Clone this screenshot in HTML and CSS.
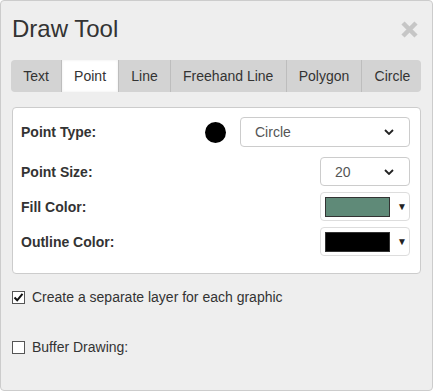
FILE: index.html
```html
<!DOCTYPE html>
<html lang="en">
<head>
    <meta charset="UTF-8">
    <meta name="viewport" content="width=device-width, initial-scale=1.0">
    <title>Draw Tool</title>
    <link rel="stylesheet" href="styles.css">
</head>
<body>
    <div class="panel">
        <div class="panel-header">
            <h1>Draw Tool</h1>
            <span class="close-button">
                <svg width="19" height="19" viewBox="0 0 19 19">
                    <path d="M3 3 L16 16 M16 3 L3 16" stroke="#c6c6c6" stroke-width="4.5" stroke-linecap="butt"/>
                </svg>
            </span>
        </div>

        <div class="tabs">
            <div class="tab">Text</div>
            <div class="tab active">Point</div>
            <div class="tab">Line</div>
            <div class="tab">Freehand Line</div>
            <div class="tab">Polygon</div>
            <div class="tab">Circle</div>
        </div>

        <!-- Point options -->
        <div class="card">
            <div class="row row-type">
                <label>Point Type:</label>
                <span class="preview-dot"></span>
                <div class="select select-wide">
                    <span>Circle</span>
                    <svg class="chevron" width="10" height="6" viewBox="0 0 10 6"><path d="M1 1 L5 5 L9 1" fill="none" stroke="#222" stroke-width="1.8"/></svg>
                </div>
            </div>
            <div class="row">
                <label>Point Size:</label>
                <div class="select select-small">
                    <span>20</span>
                    <svg class="chevron" width="10" height="6" viewBox="0 0 10 6"><path d="M1 1 L5 5 L9 1" fill="none" stroke="#222" stroke-width="1.8"/></svg>
                </div>
            </div>
            <div class="row">
                <label>Fill Color:</label>
                <div class="color-picker">
                    <span class="swatch swatch-fill"></span>
                    <span class="arrow">&#9660;</span>
                </div>
            </div>
            <div class="row">
                <label>Outline Color:</label>
                <div class="color-picker">
                    <span class="swatch swatch-outline"></span>
                    <span class="arrow">&#9660;</span>
                </div>
            </div>
        </div>

        <div class="check-row first">
            <span class="checkbox">
                <svg width="11" height="11" viewBox="0 0 11 11"><path d="M1.5 5.5 L4.2 8.3 L9.5 1.8" fill="none" stroke="#111" stroke-width="2"/></svg>
            </span>
            <span>Create a separate layer for each graphic</span>
        </div>
        <div class="check-row">
            <span class="checkbox"></span>
            <span>Buffer Drawing:</span>
        </div>
    </div>
</body>
</html>
```

FILE: styles.css
```css
body {
    margin: 0;
    font-family: "Liberation Sans", Arial, sans-serif;
    color: #333;
}
.panel {
    width: 433px;
    height: 391px;
    box-sizing: border-box;
    background-color: #eee;
    border: 1px solid #ccc;
    border-radius: 4px;
    padding: 14px 11px 0 10px;
}
.panel-header {
    display: flex;
    justify-content: space-between;
    align-items: center;
}
.panel-header h1 {
    margin: 0 0 0 1px;
    font-size: 24px;
    font-weight: normal;
    line-height: 28px;
    color: #333;
}
.close-button {
    display: flex;
    margin-right: 2px;
}
.tabs {
    display: flex;
    margin-top: 17px;
    height: 32px;
    background-color: #d3d3d3;
    border-radius: 4px;
}
.tab {
    flex: none;
    display: flex;
    align-items: center;
    justify-content: center;
    padding: 0 12.15px;
    font-size: 14px;
    color: #333;
    border-left: 1px solid #bdbdbd;
}
.tab:first-child {
    border-left: none;
    border-radius: 4px 0 0 4px;
}
.tab:last-child {
    flex: 1;
    border-radius: 0 4px 4px 0;
}
.tab.active {
    background-color: #fff;
    box-shadow: inset 0 0 3px rgba(0, 0, 0, 0.08);
}
.card {
    margin: 15px 0 0 1px;
    background-color: #fff;
    border: 1px solid #ccc;
    border-radius: 4px;
    padding: 9px 10px 17px 8px;
}
.row {
    display: flex;
    align-items: center;
    margin-top: 6px;
}
.row-type {
    margin-top: 0;
    margin-bottom: 10px;
}
.row label {
    flex: 1;
    font-size: 14px;
    font-weight: bold;
    color: #333;
}
.preview-dot {
    width: 21px;
    height: 21px;
    border-radius: 50%;
    background-color: #000;
    margin-right: 14px;
}
.select {
    display: flex;
    align-items: center;
    justify-content: space-between;
    box-sizing: border-box;
    background-color: #fff;
    border: 1px solid #ccc;
    border-radius: 4px;
    padding: 0 15px 0 14px;
    font-size: 14px;
    color: #555;
}
.select-wide {
    width: 170px;
    height: 30px;
}
.select-small {
    width: 90px;
    height: 29px;
}
.color-picker {
    display: flex;
    align-items: center;
    box-sizing: border-box;
    width: 90px;
    height: 29px;
    border: 1px solid #ddd;
    border-radius: 4px;
    background-color: #fff;
    padding: 0 0 0 4px;
}
.swatch {
    width: 65px;
    height: 20px;
    box-sizing: border-box;
    border: 1px solid #333;
}
.swatch-fill {
    background-color: #5f8a78;
}
.swatch-outline {
    background-color: #000;
}
.arrow {
    font-size: 10px;
    color: #222;
    margin-left: 7px;
}
.check-row {
    display: flex;
    align-items: center;
    font-size: 14px;
    color: #333;
    margin-top: 34px;
    margin-left: 1px;
}
.check-row.first {
    margin-top: 15px;
}
.checkbox {
    width: 13px;
    height: 13px;
    box-sizing: border-box;
    border: 1px solid #555;
    background-color: #fff;
    margin-right: 7px;
    display: flex;
    align-items: center;
    justify-content: center;
}
```
